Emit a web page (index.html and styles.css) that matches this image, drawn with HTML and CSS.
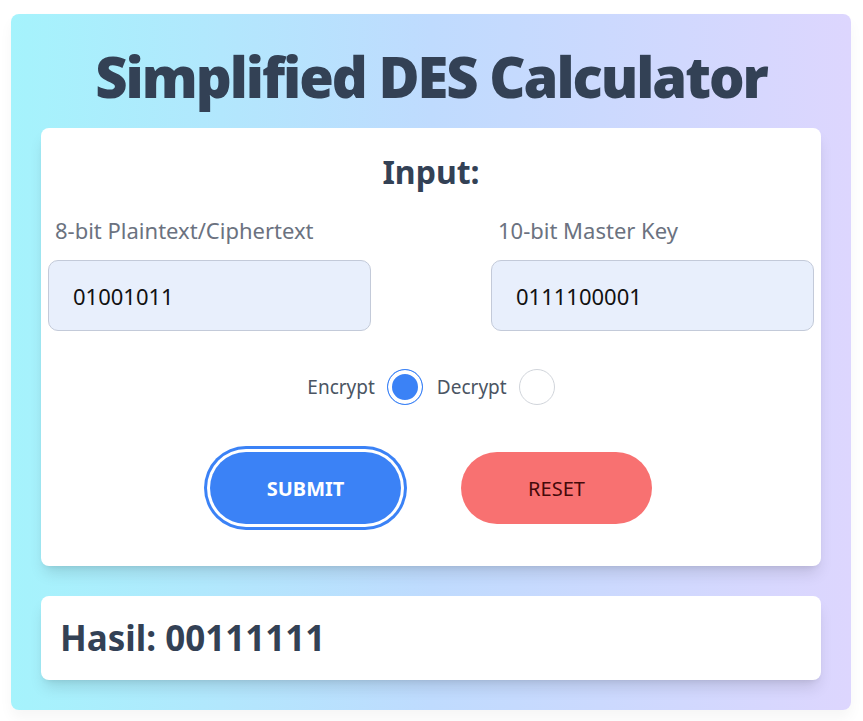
FILE: index.html
```html
<!DOCTYPE html>
<html>
   <head>
      <meta charset="UTF-8">
      <meta name="viewport" content="width=device-width, initial-scale=1.0"/>
      <title>Simplified DES Calculator</title>
      <link rel="stylesheet" href="styles.css">
   </head>
   <body>
      <div class="app">
         <h1 class="title">Simplified DES Calculator</h1>

         <form class="card input-card">
            <h2 class="card-title">Input:</h2>
            <div class="fields">
               <div class="field">
                  <label for="text">8-bit Plaintext/Ciphertext</label>
                  <input id="text" type="text" value="01001011">
               </div>
               <div class="field">
                  <label for="key">10-bit Master Key</label>
                  <input id="key" type="text" value="0111100001">
               </div>
            </div>

            <div class="modes">
               <label class="mode">Encrypt <span class="radio checked"></span></label>
               <label class="mode">Decrypt <span class="radio"></span></label>
            </div>

            <div class="actions">
               <button type="button" class="btn btn-submit">SUBMIT</button>
               <button type="button" class="btn btn-reset">RESET</button>
            </div>
         </form>

         <div class="card result-card">
            <h3 class="result">Hasil: 00111111</h3>
         </div>
      </div>
   </body>
</html>
```

FILE: styles.css
```css
*
{
   box-sizing: border-box;
}

body
{
   margin: 0;
   padding: 14px 12px 11px 11px;
   font-family: "Noto Sans", "Open Sans", sans-serif;
   background: #ffffff;
}

.app
{
   padding: 30px 30px 30px 30px;
   border-radius: 8px;
   background: linear-gradient(to right, #a5f3fc, #bfdbfe 50%, #ddd6fe);
   box-shadow: 0 8px 14px rgba(0, 0, 0, 0.04);
}

.title
{
   margin: 0 0 20px 0;
   text-align: center;
   font-size: 56px;
   line-height: 64px;
   font-weight: 900;
   color: #334155;
   letter-spacing: -2px;
}

.card
{
   background: #ffffff;
   border-radius: 8px;
   box-shadow: 0 10px 15px -3px rgba(0, 0, 0, 0.12), 0 4px 6px -4px rgba(0, 0, 0, 0.1);
}

.input-card
{
   padding: 24px 7px 42px 7px;
   margin: 0 0 30px 0;
}

.card-title
{
   margin: 0;
   text-align: center;
   font-size: 32px;
   line-height: 40px;
   font-weight: 700;
   color: #334155;
}

.fields
{
   display: flex;
   justify-content: space-between;
   margin-top: 24px;
}

.field
{
   width: 323px;
}

.field label
{
   display: block;
   padding-left: 7px;
   font-size: 22px;
   line-height: 28px;
   color: #6b7280;
   margin-bottom: 16px;
}

.field input
{
   display: block;
   width: 100%;
   height: 71px;
   padding: 0 24px;
   border: 1px solid #c3cad9;
   border-radius: 10px;
   background: #e8effc;
   font-family: inherit;
   font-size: 22px;
   color: #111111;
   outline: none;
}

.modes
{
   display: flex;
   justify-content: center;
   gap: 14px;
   margin-top: 38px;
}

.mode
{
   display: flex;
   align-items: center;
   gap: 12px;
   font-size: 19px;
   color: #4b5563;
}

.radio
{
   display: inline-block;
   width: 36px;
   height: 36px;
   border-radius: 50%;
   border: 1px solid #d1d5db;
   background: #ffffff;
}

.radio.checked
{
   border: 1px solid #3b82f6;
   background: #3b82f6;
   box-shadow: inset 0 0 0 4px #ffffff;
}

.actions
{
   display: flex;
   justify-content: center;
   gap: 60px;
   margin-top: 47px;
}

.btn
{
   width: 191px;
   height: 72px;
   border: none;
   border-radius: 36px;
   font-family: inherit;
   font-size: 20px;
}

.btn-submit
{
   background: #3b82f6;
   color: #ffffff;
   font-weight: 700;
   box-shadow: 0 0 0 3px #ffffff, 0 0 0 6px #3b82f6;
}

.btn-reset
{
   background: #f87171;
   color: #450a0a;
}

.result-card
{
   padding: 20px 19px;
}

.result
{
   margin: 0;
   font-size: 35px;
   line-height: 44px;
   font-weight: 700;
   color: #334155;
}
```
